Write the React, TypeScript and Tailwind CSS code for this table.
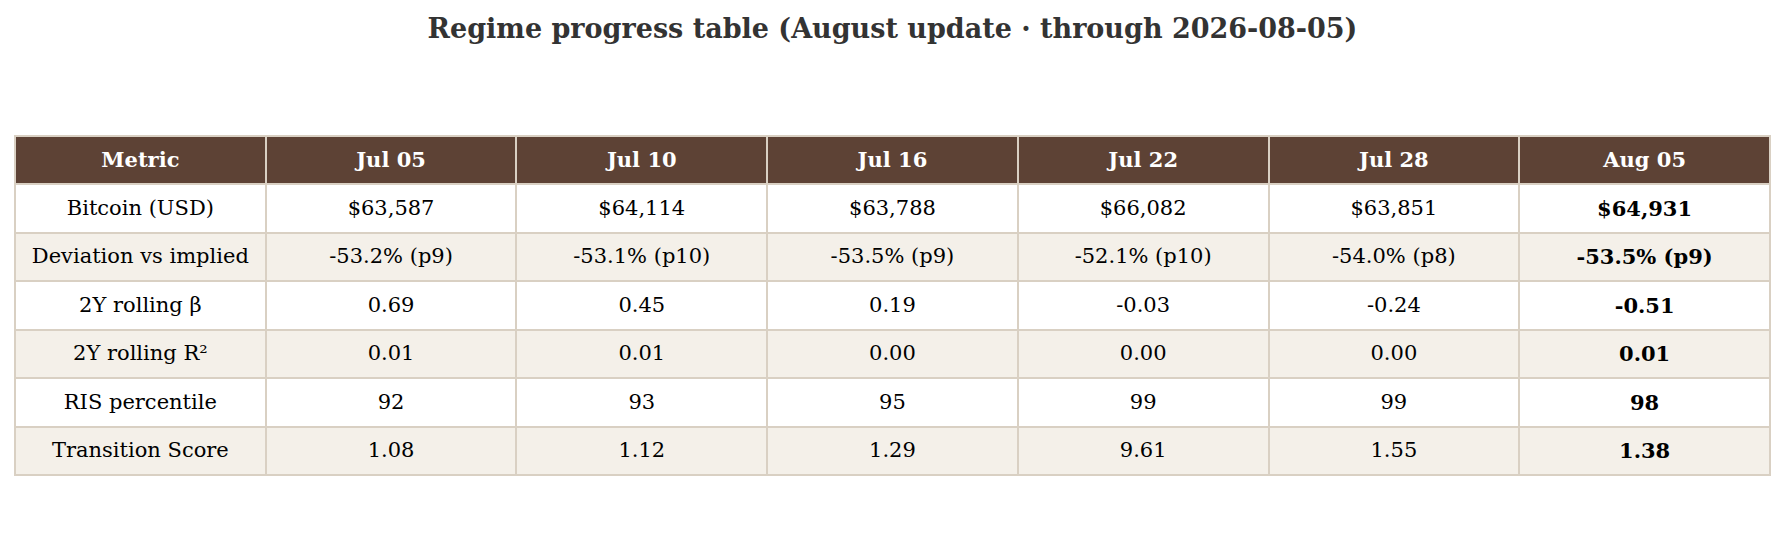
import React from "react";

const headers = ["Metric", "Jul 05", "Jul 10", "Jul 16", "Jul 22", "Jul 28", "Aug 05"];
const rows: string[][] = [
  ["Bitcoin (USD)", "$63,587", "$64,114", "$63,788", "$66,082", "$63,851", "$64,931"],
  ["Deviation vs implied", "-53.2% (p9)", "-53.1% (p10)", "-53.5% (p9)", "-52.1% (p10)", "-54.0% (p8)", "-53.5% (p9)"],
  ["2Y rolling β", "0.69", "0.45", "0.19", "-0.03", "-0.24", "-0.51"],
  ["2Y rolling R²", "0.01", "0.01", "0.00", "0.00", "0.00", "0.01"],
  ["RIS percentile", "92", "93", "95", "99", "99", "98"],
  ["Transition Score", "1.08", "1.12", "1.29", "9.61", "1.55", "1.38"],
];

export default function App() {
  return (
    <div className="w-[1785px] h-[555px] bg-white font-['DejaVu_Serif',serif] flex flex-col">
      <h1 className="text-center text-[27px] leading-[30px] font-bold text-[#333333] pt-[14px]">
        Regime progress table (August update · through 2026-08-05)
      </h1>
      <div className="pl-[14px] pt-[91px]">
        <table className="border-collapse table-fixed w-[1757px]">
          <thead>
            <tr className="bg-[#5d4235] h-[48px]">
              {headers.map((h) => (
                <th key={h} className="border-2 border-[#d9d0c3] text-white font-bold text-[21px] text-center p-0">
                  {h}
                </th>
              ))}
            </tr>
          </thead>
          <tbody>
            {rows.map((r, i) => (
              <tr key={i} className={(i % 2 === 1 ? "bg-[#f4f0e9]" : "bg-white") + " h-[48.5px]"}>
                {r.map((c, j) => (
                  <td
                    key={j}
                    className={
                      "border-2 border-[#d9d0c3] text-black text-[21px] text-center p-0 " +
                      (j === 6 ? "font-bold" : "font-normal")
                    }
                  >
                    {c}
                  </td>
                ))}
              </tr>
            ))}
          </tbody>
        </table>
      </div>
    </div>
  );
}
